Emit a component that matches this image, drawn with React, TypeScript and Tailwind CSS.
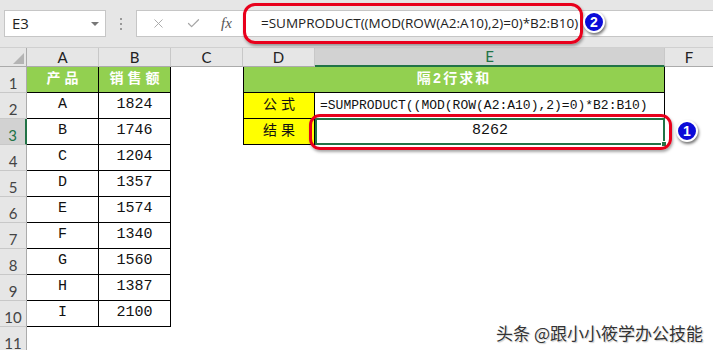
import { X, Check } from "lucide-react";

const cellFont = "font-['Liberation_Mono','Noto_Sans_CJK_SC',monospace]";
const uiFont = "font-['Open_Sans','Noto_Sans_CJK_SC',sans-serif]";
const hdrFont = "font-['Lato','Liberation_Sans',sans-serif]";

const data: [string, number][] = [
  ["A", 1824],
  ["B", 1746],
  ["C", 1204],
  ["D", 1357],
  ["E", 1574],
  ["F", 1340],
  ["G", 1560],
  ["H", 1387],
  ["I", 2100],
];

const cols = [
  { k: "A", w: "w-[72px]" },
  { k: "B", w: "w-[72px]" },
  { k: "C", w: "w-[72px]" },
  { k: "D", w: "w-[72px]" },
  { k: "E", w: "w-[350px]" },
];

function RowHead({ n }: { n: number }) {
  const sel = n === 3;
  return (
    <div
      className={`w-[27px] shrink-0 h-full flex items-end justify-center pb-[1px] text-[15px] leading-none border-b border-[#c8c8c8] ${hdrFont} ${
        sel
          ? "bg-[#d2d2d2] text-[#217346] border-r-2 border-r-[#217346]"
          : "bg-[#e6e6e6] text-[#444] border-r border-r-[#ababab]"
      }`}
    >
      {n}
    </div>
  );
}

function Badge({ n }: { n: number }) {
  return (
    <div className="w-[22px] h-[22px] rounded-full bg-[#0b0bd8] border-2 border-white shadow-[1px_2px_3px_rgba(0,0,0,0.55)] flex items-center justify-center text-white text-[14px] font-bold font-['Liberation_Sans',sans-serif] leading-none">
      {n}
    </div>
  );
}

export default function App() {
  return (
    <div className="relative w-[713px] h-[350px] overflow-hidden bg-white">
      {/* formula bar */}
      <div className="h-[48px] bg-[#e6e6e6] border-b border-[#d0d0d0] flex items-center pl-[4px]">
        <div className="w-[102px] h-[27px] bg-white border border-[#c6c6c6] flex items-center justify-between pl-[7px] pr-[6px]">
          <span className={`text-[15px] text-[#222] ${uiFont}`}>E3</span>
          <span className="w-0 h-0 border-l-[4px] border-r-[4px] border-t-[4px] border-l-transparent border-r-transparent border-t-[#777]" />
        </div>
        <div className="w-[30px] flex flex-col items-center gap-[3px]">
          <span className="w-[2px] h-[2px] bg-[#999]" />
          <span className="w-[2px] h-[2px] bg-[#999]" />
          <span className="w-[2px] h-[2px] bg-[#999]" />
        </div>
        <div className="flex-1 h-[27px] bg-white border-y border-l border-[#c6c6c6] flex items-center">
          <div className="w-[107px] flex items-center justify-around pl-[4px] pr-[2px]">
            <X size={15} strokeWidth={1.5} className="text-[#a6a6a6]" />
            <Check size={15} strokeWidth={2} className="text-[#a6a6a6]" />
            <span className="text-[15px] italic text-[#555] font-['Liberation_Serif',serif]">fx</span>
          </div>
          <span className={`ml-[17px] text-[13.5px] text-[#222] whitespace-nowrap ${uiFont}`}>
            =SUMPRODUCT((MOD(ROW(A2:A10),2)=0)*B2:B10)
          </span>
        </div>
      </div>

      {/* column headers */}
      <div className={`flex h-[19px] bg-[#e6e6e6] ${hdrFont}`}>
        <div className="w-[27px] shrink-0 border-r border-b border-[#ababab] flex items-end justify-end p-[2px]">
          <svg width="11" height="11" viewBox="0 0 11 11">
            <polygon points="11,0 11,11 0,11" fill="#b4b4b4" />
          </svg>
        </div>
        {cols.map((c) => (
          <div
            key={c.k}
            className={`${c.w} shrink-0 flex items-center justify-center text-[15px] leading-none border-r border-[#c8c8c8] ${
              c.k === "E"
                ? "bg-[#d2d2d2] text-[#217346] border-b-2 border-b-[#217346]"
                : "text-[#222] border-b border-b-[#ababab]"
            }`}
          >
            {c.k}
          </div>
        ))}
        <div className="flex-1 flex items-center justify-center text-[15px] text-[#222] border-b border-[#ababab]">
          F
        </div>
      </div>

      {/* rows */}
      {Array.from({ length: 11 }, (_, i) => i + 1).map((n) => {
        const d = n >= 2 && n <= 10 ? data[n - 2] : null;
        return (
          <div key={n} className={`flex h-[26px] ${cellFont}`}>
            <RowHead n={n} />
            {/* A & B */}
            {n === 1 ? (
              <>
                <div className="w-[72px] shrink-0 bg-[#92d050] border-r border-b border-black flex items-center justify-center text-white font-bold text-[14px] tracking-[4px] pl-[4px]">
                  产品
                </div>
                <div className="w-[72px] shrink-0 bg-[#92d050] border-r border-b border-black flex items-center justify-center text-white font-bold text-[14px] tracking-[4px] pl-[4px]">
                  销售额
                </div>
              </>
            ) : d ? (
              <>
                <div className="w-[72px] shrink-0 border-r border-b border-black flex items-center justify-center text-[15px] text-[#111]">
                  {d[0]}
                </div>
                <div className="w-[72px] shrink-0 border-r border-b border-black flex items-center justify-center text-[15px] text-[#111]">
                  {d[1]}
                </div>
              </>
            ) : (
              <div className="w-[144px] shrink-0" />
            )}
            {/* C */}
            <div className="w-[72px] shrink-0" />
            {/* D & E */}
            {n === 1 && (
              <div className="w-[422px] shrink-0 bg-[#92d050] border-x border-b border-black flex items-center justify-center text-white font-bold text-[14px] tracking-[2px]">
                隔2行求和
              </div>
            )}
            {n === 2 && (
              <>
                <div className="w-[72px] shrink-0 bg-[#ffff00] border-x border-b border-black flex items-center justify-center text-[14px] text-[#111] tracking-[4px] pl-[4px]">
                  公式
                </div>
                <div className="w-[350px] shrink-0 border-r border-b border-black flex items-center pl-[5px] text-[13px] text-[#111] whitespace-nowrap">
                  =SUMPRODUCT((MOD(ROW(A2:A10),2)=0)*B2:B10)
                </div>
              </>
            )}
            {n === 3 && (
              <>
                <div className="w-[72px] shrink-0 bg-[#ffff00] border-x border-b border-black flex items-center justify-center text-[14px] text-[#111] tracking-[4px] pl-[4px]">
                  结果
                </div>
                <div className="relative w-[350px] shrink-0 border-2 border-[#217346] -mt-[1px] h-[27px] flex items-center justify-center text-[15px] text-[#111]">
                  8262
                  <span className="absolute -right-[4px] -bottom-[4px] w-[6px] h-[6px] bg-[#217346] border border-white" />
                </div>
              </>
            )}
          </div>
        );
      })}

      {/* annotations */}
      <div className="absolute left-[243px] top-[3px] w-[340px] h-[41px] border-[3px] border-[#e8001c] rounded-[12px] shadow-[1px_2px_3px_rgba(0,0,0,0.35)]" />
      <div className="absolute left-[583px] top-[11px]">
        <Badge n={2} />
      </div>
      <div className="absolute left-[309px] top-[114px] w-[363px] h-[36px] border-[3px] border-[#e8001c] rounded-[11px] shadow-[1px_2px_3px_rgba(0,0,0,0.35)]" />
      <div className="absolute left-[676px] top-[120px]">
        <Badge n={1} />
      </div>

      <div className="absolute right-[10px] bottom-[9px] text-[17px] text-[#333] font-['Noto_Sans_CJK_SC',sans-serif] [text-shadow:0_0_2px_#fff,1px_1px_1px_rgba(0,0,0,0.25)] leading-none">
        头条 @跟小小筱学办公技能
      </div>
    </div>
  );
}
